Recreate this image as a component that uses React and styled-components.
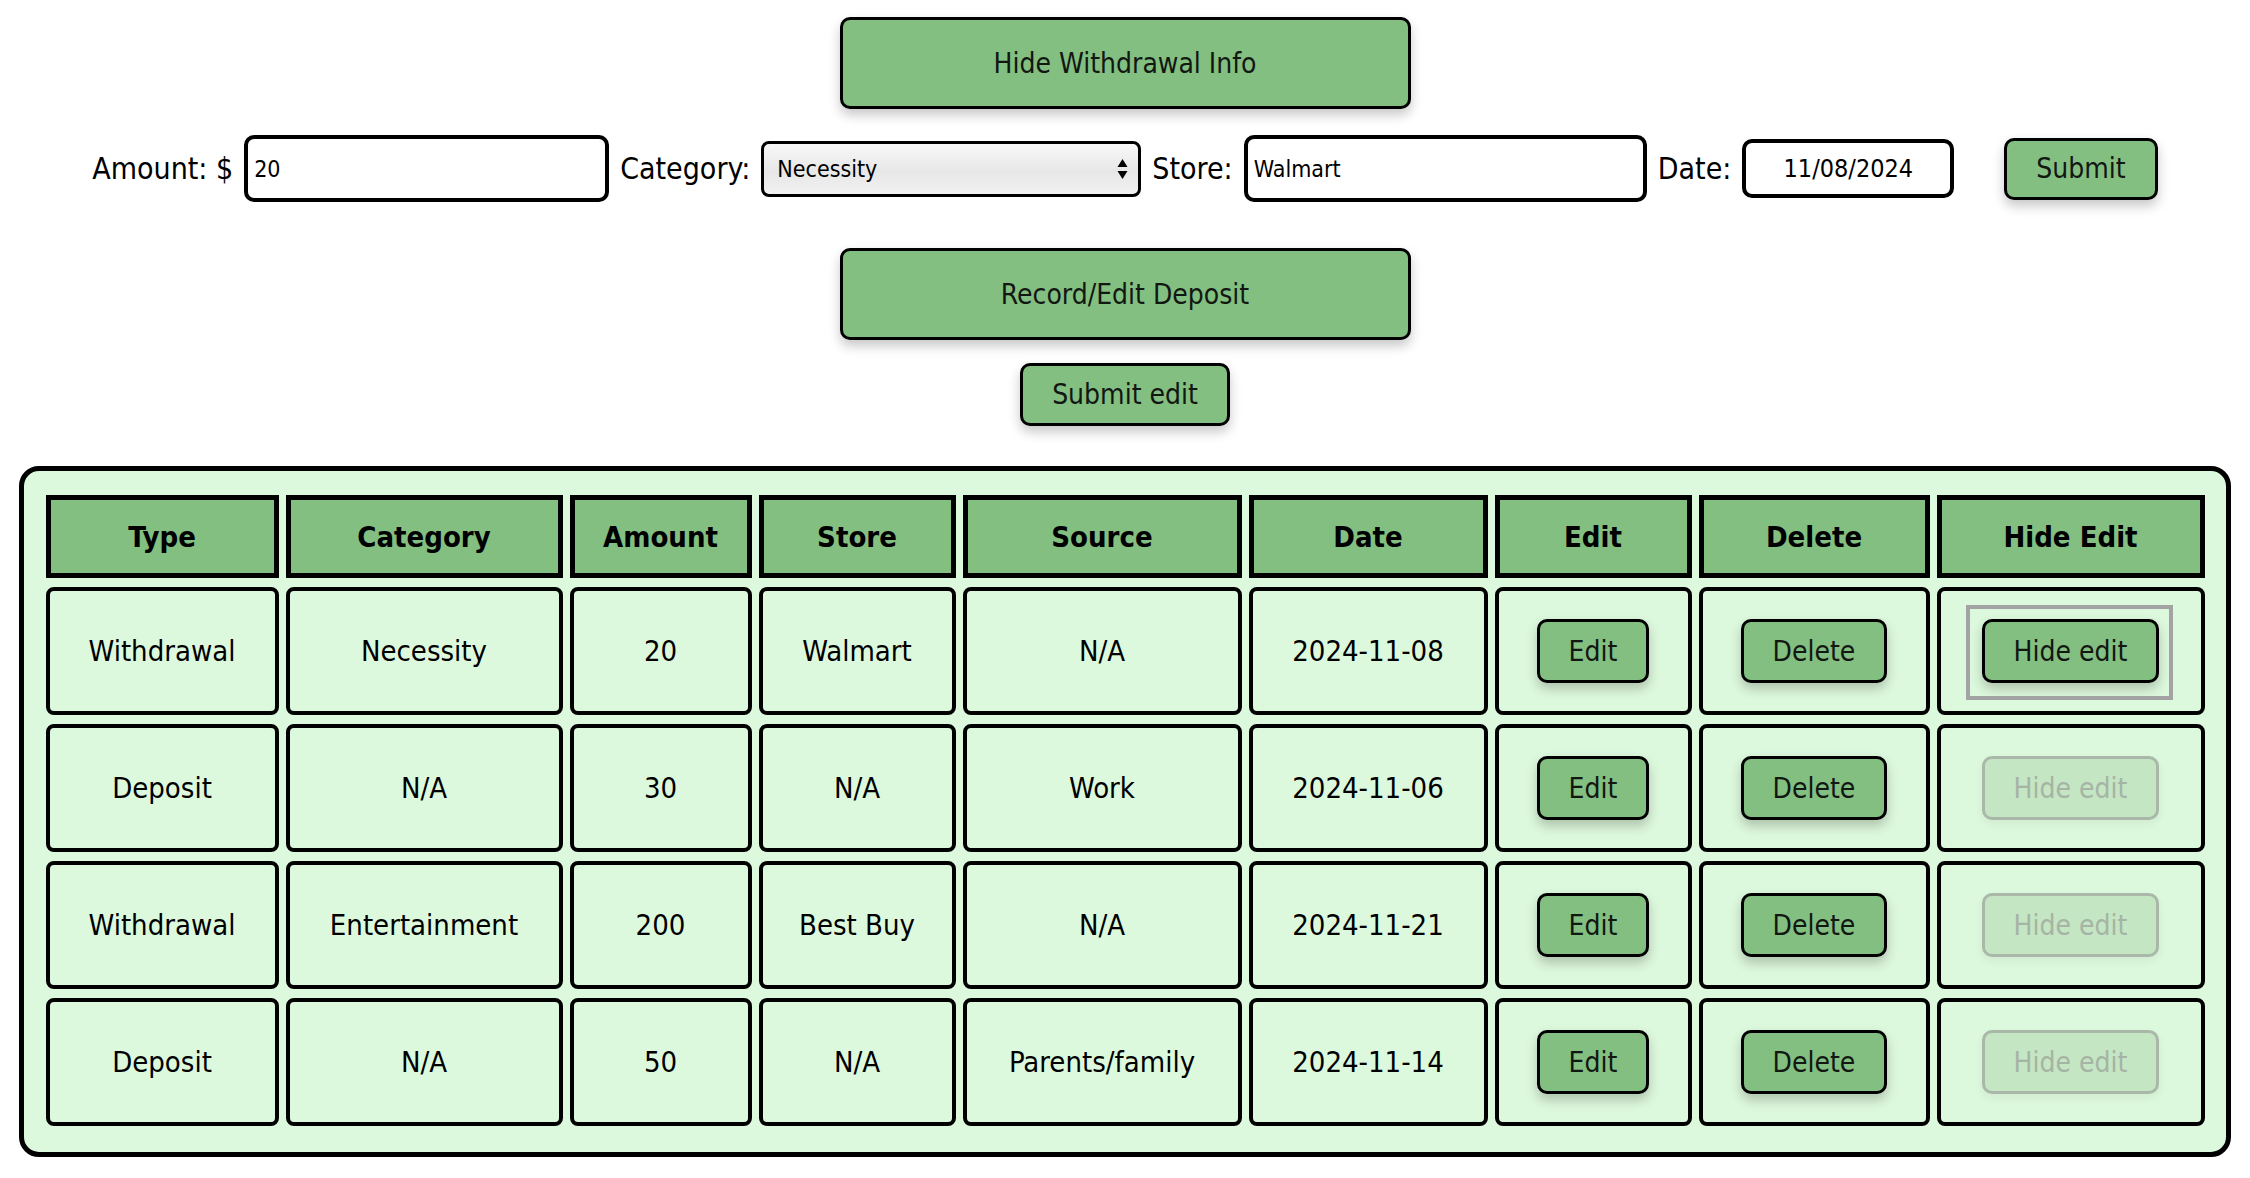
import React from 'react';
import styled, { createGlobalStyle, css } from 'styled-components';

const GlobalStyle = createGlobalStyle`
  html, body {
    margin: 0;
    padding: 0;
    background: #ffffff;
  }
  body {
    font-family: "DejaVu Sans Condensed", "DejaVu Sans", Verdana, sans-serif;
    font-stretch: condensed;
    color: #000;
  }
`;

const green = '#82bf81';
const paleGreen = '#ddf9dd';
const font = `"DejaVu Sans Condensed", "DejaVu Sans", Verdana, sans-serif`;

const Page = styled.div`
  display: flex;
  flex-direction: column;
  align-items: center;
  padding: 17px 0 20px;
`;

const GreenButton = styled.button`
  position: relative;
  box-sizing: border-box;
  font-family: ${font};
  font-stretch: condensed;
  font-size: 28px;
  color: #121712;
  background: ${green};
  border: 3px solid #000;
  border-radius: 10px;
  box-shadow: 0 6px 12px rgba(0, 0, 0, 0.22);
  padding: 0 29px;
  cursor: pointer;
  height: ${(p) => p.$h || 64}px;
  ${(p) => p.$w && css`width: ${p.$w}px;`}
  margin-top: ${(p) => p.$mt || 0}px;
  margin-left: ${(p) => p.$ml || 0}px;
  outline: none;
  ${(p) =>
    p.$focused &&
    css`
      &::after {
        content: '';
        position: absolute;
        top: -17px;
        bottom: -20px;
        left: -19px;
        right: -17px;
        border: 4px solid #a3a3a3;
        pointer-events: none;
      }
    `}
  &:disabled {
    background: #c4e6c3;
    border-color: #aab8aa;
    color: #a6b4a6;
    box-shadow: 0 4px 10px rgba(0, 0, 0, 0.06);
    cursor: default;
  }
`;

const FormRow = styled.div`
  display: flex;
  align-items: center;
  justify-content: center;
  gap: 11px;
  margin-top: 26px;
  height: 67px;
`;

const Label = styled.label`
  font-size: 30px;
  white-space: nowrap;
`;

const TextInput = styled.input`
  box-sizing: border-box;
  width: ${(p) => p.$w}px;
  height: ${(p) => p.$h || 67}px;
  border: 4px solid #000;
  border-radius: 10px;
  padding: 0 6px;
  font-family: ${font};
  font-stretch: condensed;
  font-size: ${(p) => p.$fs || 23}px;
  text-align: ${(p) => (p.$center ? 'center' : 'left')};
  color: #000;
  background: #fff;
  outline: none;
`;

const SelectWrap = styled.div`
  position: relative;
  width: 380px;
  height: 56px;
`;

const Select = styled.select`
  appearance: none;
  box-sizing: border-box;
  width: 100%;
  height: 100%;
  border: 3px solid #000;
  border-radius: 8px;
  padding: 0 40px 0 13px;
  font-family: ${font};
  font-stretch: condensed;
  font-size: 23px;
  color: #000;
  background: linear-gradient(#f8f8f8, #e7e7e7 55%, #f1f1f1);
  outline: none;
`;

const Arrows = styled.svg`
  position: absolute;
  right: 13px;
  top: 50%;
  transform: translateY(-50%);
  pointer-events: none;
`;

const Card = styled.div`
  box-sizing: border-box;
  width: 2212px;
  margin-top: 40px;
  background: ${paleGreen};
  border: 5px solid #000;
  border-radius: 20px;
  padding: 24px 0 26px;
  display: flex;
  justify-content: center;
`;

const Grid = styled.div`
  display: grid;
  grid-template-columns: 233px 277px 182px 197px 279px 239px 197px 231px 268px;
  grid-auto-rows: 128px;
  grid-template-rows: 83px;
  column-gap: 7px;
  row-gap: 9px;
`;

const HeadCell = styled.div`
  box-sizing: border-box;
  display: flex;
  align-items: center;
  justify-content: center;
  background: ${green};
  border: 5px solid #000;
  font-size: 29px;
  font-weight: bold;
`;

const Cell = styled.div`
  box-sizing: border-box;
  display: flex;
  align-items: center;
  justify-content: center;
  border: 4px solid #000;
  border-radius: 8px;
  font-size: 29px;
  white-space: nowrap;
`;

const headers = ['Type', 'Category', 'Amount', 'Store', 'Source', 'Date', 'Edit', 'Delete', 'Hide Edit'];

const rows = [
  { type: 'Withdrawal', category: 'Necessity', amount: 20, store: 'Walmart', source: 'N/A', date: '2024-11-08' },
  { type: 'Deposit', category: 'N/A', amount: 30, store: 'N/A', source: 'Work', date: '2024-11-06' },
  { type: 'Withdrawal', category: 'Entertainment', amount: 200, store: 'Best Buy', source: 'N/A', date: '2024-11-21' },
  { type: 'Deposit', category: 'N/A', amount: 50, store: 'N/A', source: 'Parents/family', date: '2024-11-14' },
];

export default function App() {
  return (
    <Page>
      <GlobalStyle />
      <GreenButton $w={571} $h={92}>Hide Withdrawal Info</GreenButton>

      <FormRow>
        <Label>Amount: $</Label>
        <TextInput $w={365} defaultValue="20" />
        <Label>Category:</Label>
        <SelectWrap>
          <Select defaultValue="Necessity">
            <option>Necessity</option>
            <option>Entertainment</option>
          </Select>
          <Arrows width="11" height="22" viewBox="0 0 11 22">
            <path d="M5.5 1 L10.5 9 H0.5 Z" fill="#000" />
            <path d="M5.5 21 L10.5 13 H0.5 Z" fill="#000" />
          </Arrows>
        </SelectWrap>
        <Label>Store:</Label>
        <TextInput $w={403} defaultValue="Walmart" />
        <Label>Date:</Label>
        <TextInput $w={212} $h={59} $fs={25} $center defaultValue="11/08/2024" />
        <GreenButton $h={62} $ml={39}>Submit</GreenButton>
      </FormRow>

      <GreenButton $w={571} $h={92} $mt={46}>Record/Edit Deposit</GreenButton>
      <GreenButton $h={63} $mt={23}>Submit edit</GreenButton>

      <Card>
        <Grid>
          {headers.map((h) => (
            <HeadCell key={h}>{h}</HeadCell>
          ))}
          {rows.map((r, i) => (
            <React.Fragment key={i}>
              <Cell>{r.type}</Cell>
              <Cell>{r.category}</Cell>
              <Cell>{r.amount}</Cell>
              <Cell>{r.store}</Cell>
              <Cell>{r.source}</Cell>
              <Cell>{r.date}</Cell>
              <Cell>
                <GreenButton>Edit</GreenButton>
              </Cell>
              <Cell>
                <GreenButton>Delete</GreenButton>
              </Cell>
              <Cell>
                <GreenButton $focused={i === 0} disabled={i !== 0}>
                  Hide edit
                </GreenButton>
              </Cell>
            </React.Fragment>
          ))}
        </Grid>
      </Card>
    </Page>
  );
}
